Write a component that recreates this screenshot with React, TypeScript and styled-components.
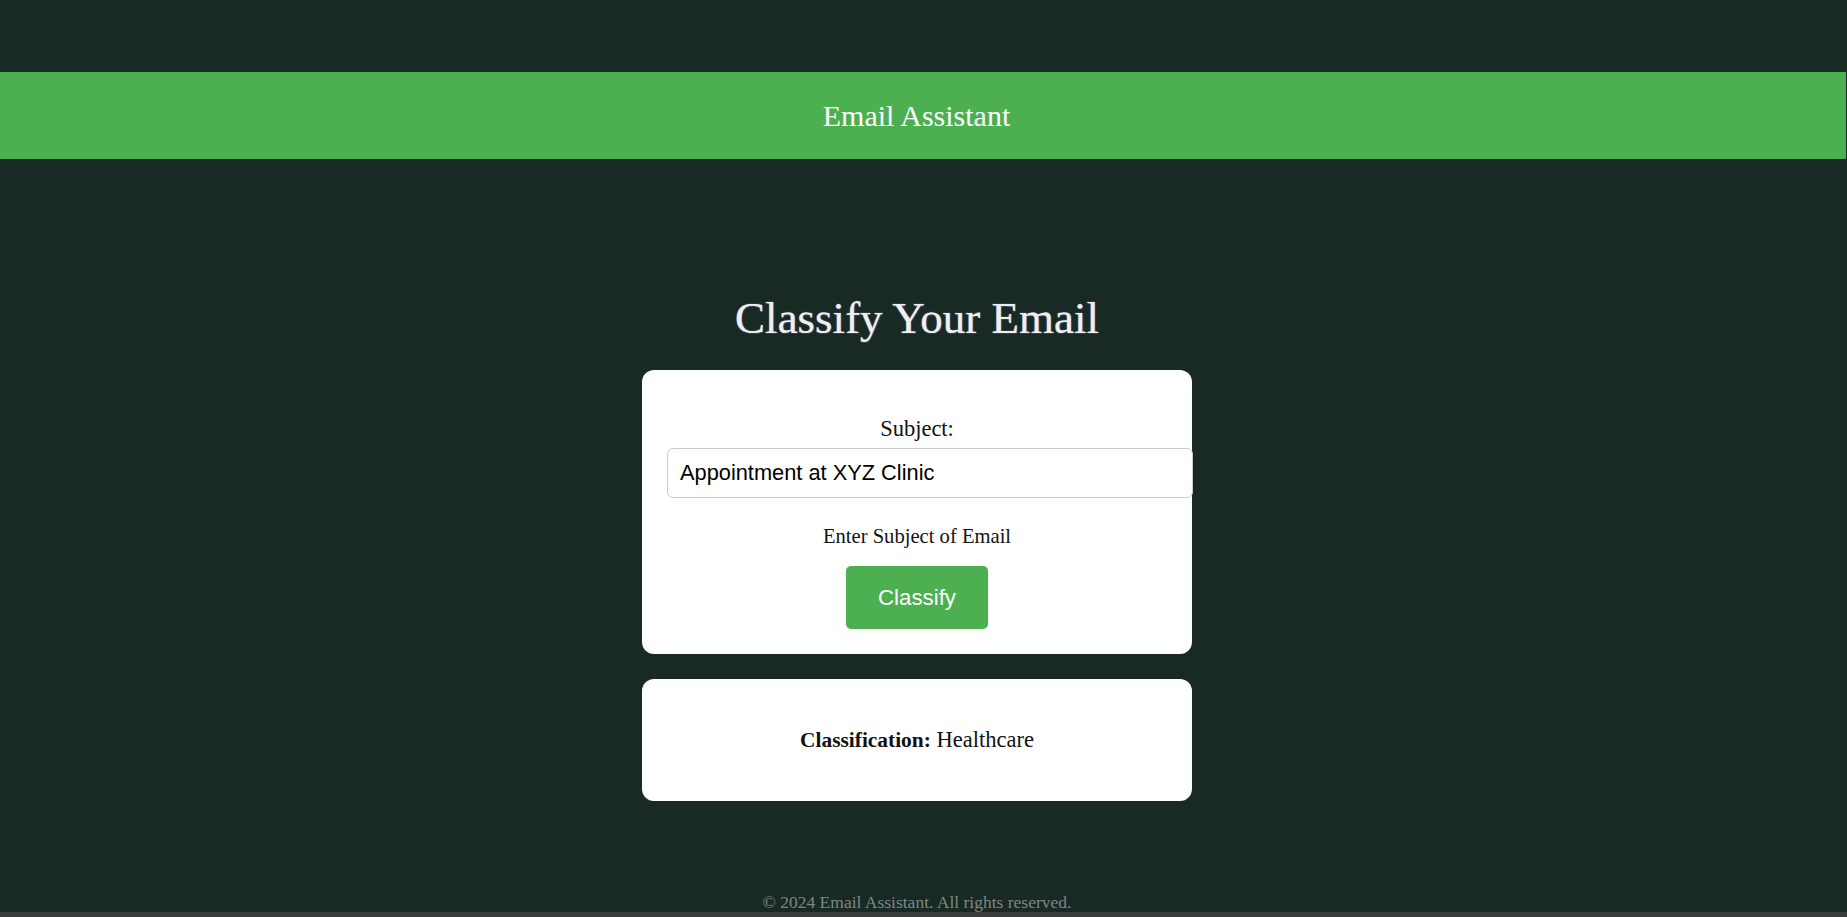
import React from "react";
import styled, { createGlobalStyle } from "styled-components";

const GlobalStyle = createGlobalStyle`
  html, body {
    margin: 0;
    padding: 0;
    background: #192a25;
  }
  body {
    font-family: "Liberation Serif", "Times New Roman", serif;
    overflow: hidden;
  }
  * { box-sizing: content-box; }
`;

const Page = styled.div`
  display: flex;
  flex-direction: column;
  box-sizing: border-box;
  height: 917px;
  padding-top: 72px;
  background: #192a25;
`;

const Header = styled.header`
  width: 1846px;
  background: #4caf50;
  padding: 27px 13px 26px 0;
  box-sizing: border-box;
  display: flex;
  justify-content: center;
`;

const HeaderTitle = styled.h1`
  margin: 0;
  font-size: 30px;
  line-height: 34px;
  font-weight: 400;
  color: #ffffff;
`;

const Main = styled.main`
  display: flex;
  flex-direction: column;
  align-items: center;
  padding: 133px 13px 0 0;
`;

const Title = styled.h2`
  margin: 0 0 26px;
  font-size: 45px;
  line-height: 52px;
  font-weight: 400;
  color: #f0eeee;
  text-shadow: 1px 1px 1px rgba(40, 70, 110, 0.7), 0 0 1px rgba(240, 238, 238, 0.9);
`;

const Card = styled.section<{ $gap?: number }>`
  width: 500px;
  padding: 25px;
  background: #ffffff;
  border-radius: 12px;
  margin-bottom: ${(p) => p.$gap ?? 0}px;
  display: flex;
  flex-direction: column;
  align-items: center;
`;

const Label = styled.label`
  margin-top: 21px;
  font-size: 22.5px;
  line-height: 26px;
  color: #111;
`;

const Input = styled.input`
  align-self: stretch;
  width: 100%;
  margin-top: 6px;
  padding: 12px 12px;
  height: 24px;
  border: 1px solid #cccccc;
  border-radius: 6px;
  font-family: "Liberation Sans", Arial, sans-serif;
  font-size: 21.8px;
  color: #000;
  background: #fff;
  outline: none;
`;

const Hint = styled.p`
  margin: 26px 0 0;
  font-size: 20.6px;
  line-height: 24px;
  color: #111;
`;

const Button = styled.button`
  margin-top: 18px;
  padding: 19px 32px;
  height: 25px;
  box-sizing: content-box;
  border: none;
  border-radius: 5px;
  background: #4caf50;
  color: #ffffff;
  font-family: "Liberation Sans", Arial, sans-serif;
  font-size: 22.3px;
  line-height: 25px;
  cursor: pointer;
`;

const Result = styled.p`
  margin: 23px 0;
  font-size: 22.5px;
  line-height: 26px;
  color: #111;

  strong {
    font-size: 21.4px;
    font-weight: 700;
  }
`;

const Footer = styled.footer`
  margin-top: auto;
  display: flex;
  flex-direction: column;
`;

const FooterText = styled.p`
  margin: 0;
  padding-right: 13px;
  text-align: center;
  font-size: 17.5px;
  line-height: 20px;
  color: #7f8783;
`;

const FooterBar = styled.div`
  height: 5px;
  background: #3b3d3c;
`;

export default function App() {
  return (
    <>
      <GlobalStyle />
      <Page>
        <Header>
          <HeaderTitle>Email Assistant</HeaderTitle>
        </Header>
        <Main>
          <Title>Classify Your Email</Title>
          <Card $gap={25}>
            <Label htmlFor="subject">Subject:</Label>
            <Input id="subject" type="text" defaultValue="Appointment at XYZ Clinic" />
            <Hint>Enter Subject of Email</Hint>
            <Button type="button">Classify</Button>
          </Card>
          <Card>
            <Result>
              <strong>Classification:</strong> Healthcare
            </Result>
          </Card>
        </Main>
        <Footer>
          <FooterText>© 2024 Email Assistant. All rights reserved.</FooterText>
          <FooterBar />
        </Footer>
      </Page>
    </>
  );
}
